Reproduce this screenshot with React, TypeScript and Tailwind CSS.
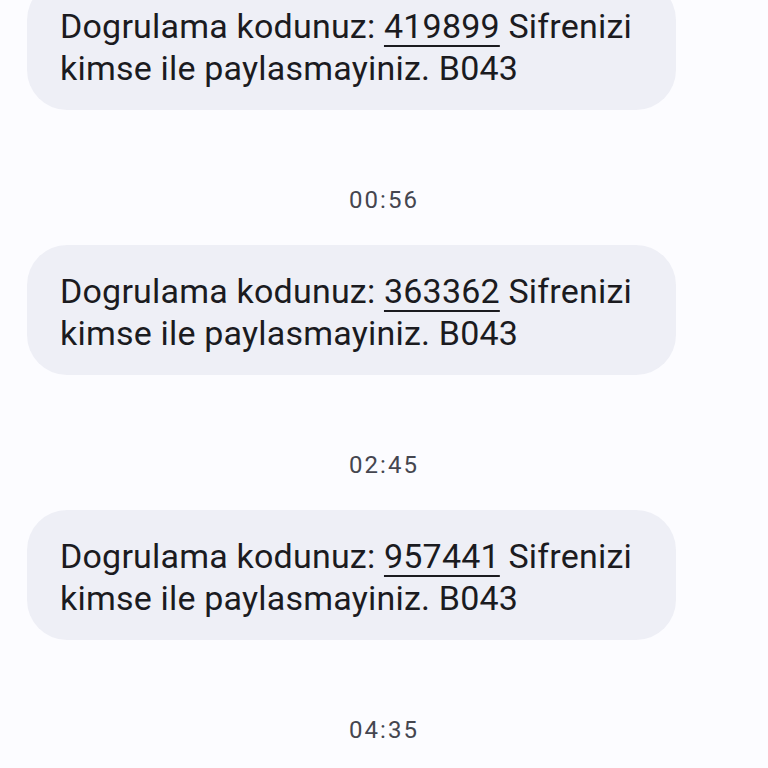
import React from "react";

const messages = [
  { code: "419899", time: "00:56" },
  { code: "363362", time: "02:45" },
  { code: "957441", time: "04:35" },
];

export default function App() {
  return (
    <div
      className="w-[768px] h-[768px] overflow-hidden bg-[#fcfcff]"
      style={{ fontFamily: "Roboto, 'Noto Sans', sans-serif" }}
    >
      <div className="flex flex-col mt-[-20px]">
        {messages.map((m) => (
          <div key={m.code} className="flex flex-col">
            <div className="ml-[27px] w-[649px] h-[130px] rounded-[40px] bg-[#eeeff6] pl-[33px] pt-[25px] text-[34px] leading-[42px] tracking-[0.2px] text-[#1b1b1f] whitespace-nowrap">
              Dogrulama kodunuz:{" "}
              <span className="underline decoration-2 underline-offset-[7px]">{m.code}</span>{" "}
              Sifrenizi
              <br />
              kimse ile paylasmayiniz. B043
            </div>
            <div className="mt-[76px] mb-[31px] h-[28px] text-center text-[24px] leading-[28px] tracking-[2px] text-[#45464f]">
              {m.time}
            </div>
          </div>
        ))}
      </div>
    </div>
  );
}
